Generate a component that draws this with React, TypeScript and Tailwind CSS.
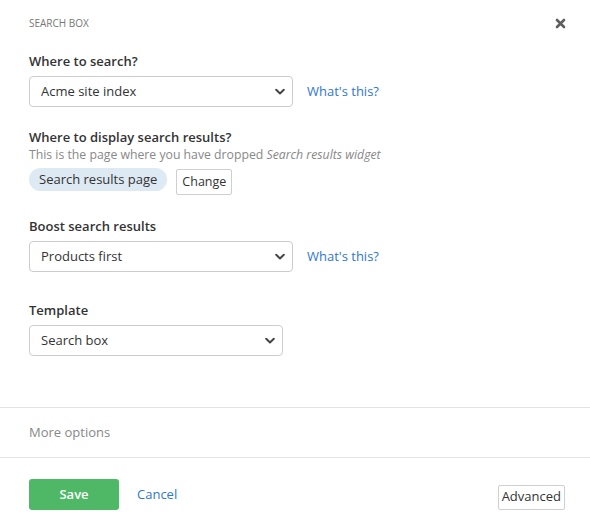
import React from "react";

function Chevron() {
  return (
    <svg width="10" height="7" viewBox="0 0 10 7" className="pointer-events-none absolute right-[8px] top-1/2 -translate-y-1/2">
      <path d="M1.2 1.3 L5 5 L8.8 1.3" fill="none" stroke="#444" strokeWidth="2" strokeLinecap="round" strokeLinejoin="round" />
    </svg>
  );
}

function SelectBox({ value, width }: { value: string; width: string }) {
  return (
    <div className={`relative ${width} h-[31px]`}>
      <select
        defaultValue={value}
        className="h-full w-full appearance-none rounded-[4px] border border-[#cccccc] bg-white pl-[11px] pr-[28px] text-[13px] text-[#333] outline-none"
      >
        <option>{value}</option>
      </select>
      <Chevron />
    </div>
  );
}

function Label({ children }: { children: React.ReactNode }) {
  return <div className="text-[13px] font-semibold leading-[20px] text-[#333]">{children}</div>;
}

export default function App() {
  return (
    <div
      className="flex h-[527px] w-[590px] flex-col bg-white text-[#333]"
      style={{ fontFamily: '"Open Sans", "Noto Sans", sans-serif' }}
    >
      {/* header */}
      <div className="flex items-start justify-between pl-[29px] pr-[24px] pt-[16px]">
        <div className="text-[10px] uppercase leading-[14px] text-[#777]">Search box</div>
        <button className="mt-[1px] flex h-[12px] w-[12px] items-center justify-center">
          <svg width="11" height="11" viewBox="0 0 11 11">
            <path d="M2 2 L9 9 M9 2 L2 9" stroke="#5e5e5e" strokeWidth="2.6" strokeLinecap="round" />
          </svg>
        </button>
      </div>

      {/* form body */}
      <div className="flex flex-col px-[29px] pt-[21px]">
        <Label>Where to search?</Label>
        <div className="mt-[5px] flex items-center gap-[14px]">
          <SelectBox value="Acme site index" width="w-[264px]" />
          <a className="text-[13px] text-[#2f78cf]">What's this?</a>
        </div>

        <div className="mt-[20px]">
          <Label>Where to display search results?</Label>
          <div className="text-[12.25px] leading-[16px] text-[#888]">
            This is the page where you have dropped <span className="italic">Search results widget</span>
          </div>
          <div className="mt-[5px] flex items-start gap-[9px]">
            <span className="flex h-[23px] items-center rounded-full bg-[#dde9f3] px-[10px] text-[13px] text-[#333]">
              Search results page
            </span>
            <button className="mt-[1px] flex h-[26px] items-center rounded-[2px] border border-[#cfcfcf] bg-white px-[5px] text-[12.5px] text-[#333]">
              Change
            </button>
          </div>
        </div>

        <div className="mt-[21px]">
          <Label>Boost search results</Label>
          <div className="mt-[5px] flex items-center gap-[14px]">
            <SelectBox value="Products first" width="w-[264px]" />
            <a className="text-[13px] text-[#2f78cf]">What's this?</a>
          </div>
        </div>

        <div className="mt-[28px]">
          <Label>Template</Label>
          <div className="mt-[5px]">
            <SelectBox value="Search box" width="w-[254px]" />
          </div>
        </div>
      </div>

      {/* more options */}
      <div className="mt-[51px] flex h-[51px] items-center border-y border-[#e3e3e3] px-[29px] text-[13px] text-[#888]">
        More options
      </div>

      {/* footer */}
      <div className="flex items-center pl-[29px] pr-[25px] pt-[21px]">
        <button className="h-[31px] w-[90px] rounded-[3px] bg-[#4eb866] text-[13px] font-semibold text-white">Save</button>
        <a className="ml-[18px] text-[13px] text-[#2f78cf]">Cancel</a>
        <button className="ml-auto mt-[5px] flex h-[25px] items-center rounded-[2px] border border-[#cfcfcf] bg-white px-[3px] text-[13px] text-[#333]">
          Advanced
        </button>
      </div>
    </div>
  );
}
